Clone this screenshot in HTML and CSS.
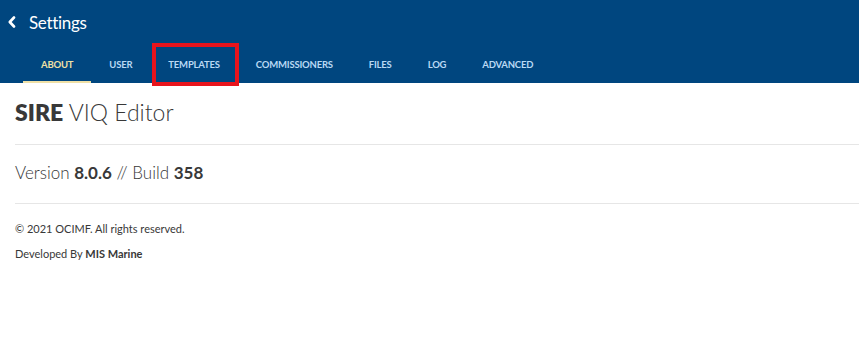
FILE: index.html
```html
<!DOCTYPE html>
<html lang="en">
<head>
    <meta charset="UTF-8">
    <meta name="viewport" content="width=device-width, initial-scale=1.0">
    <title>Settings</title>
    <link rel="stylesheet" href="styles.css">
</head>
<body>
    <header class="header">
        <div class="header-top">
            <svg class="back-icon" width="10" height="12" viewBox="0 0 10 12">
                <path d="M7 1.5 L2.8 6 L7 10.5" fill="none" stroke="#ffffff" stroke-width="2.6" stroke-linecap="round" stroke-linejoin="round"/>
            </svg>
            <span class="header-title">Settings</span>
        </div>
        <nav class="tabs">
            <a class="tab active">ABOUT</a>
            <a class="tab">USER</a>
            <a class="tab highlight">TEMPLATES</a>
            <a class="tab">COMMISSIONERS</a>
            <a class="tab">FILES</a>
            <a class="tab">LOG</a>
            <a class="tab">ADVANCED</a>
        </nav>
    </header>

    <main class="content">
        <h1 class="app-name"><b>SIRE</b> VIQ Editor</h1>
        <div class="version">Version <b>8.0.6</b> // Build <b>358</b></div>
        <div class="credits">
            <p>&copy; 2021 OCIMF. All rights reserved.</p>
            <p>Developed By <b>MIS Marine</b></p>
        </div>
    </main>
</body>
</html>
```

FILE: styles.css
```css
:root {
    --header-bg: #00467f;
    --tab-color: #b9d9f4;
    --tab-active: #efe0a6;
    --text-color: #383838;
    --line-color: #e6e6e6;
}

body {
    margin: 0;
    font-family: 'Lato', 'Open Sans', sans-serif;
    color: var(--text-color);
    background: #ffffff;
}

.header {
    background: var(--header-bg);
    height: 83px;
    display: flex;
    flex-direction: column;
}

.header-top {
    display: flex;
    align-items: center;
    height: 44px;
    padding-left: 7px;
}

.back-icon {
    margin-right: 12px;
    margin-top: -1px;
}

.header-title {
    color: #ffffff;
    font-size: 17px;
    letter-spacing: -0.3px;
}

.tabs {
    display: flex;
    padding-left: 23px;
    flex: 1;
}

.tab {
    position: relative;
    display: flex;
    align-items: center;
    padding: 3px 18px 0;
    color: var(--tab-color);
    font-size: 9.5px;
    letter-spacing: -0.2px;
    font-weight: bold;
    border-bottom: 2px solid transparent;
}

.tab.active {
    color: var(--tab-active);
    border-bottom-color: var(--tab-active);
}

.tab.highlight::after {
    content: '';
    position: absolute;
    left: 2px;
    right: -1px;
    top: -1px;
    bottom: -5px;
    border: 4px solid #e8141c;
}

.content {
    padding: 0 0 0 15px;
}

.app-name {
    margin: 0;
    padding: 15px 0 18px;
    font-size: 23px;
    font-weight: 300;
    line-height: 28px;
    border-bottom: 1px solid var(--line-color);
}

.app-name b {
    font-weight: 800;
}

.version {
    font-size: 17px;
    font-weight: 300;
    padding: 17px 0 19px;
    line-height: 22px;
    border-bottom: 1px solid var(--line-color);
}

.version b {
    font-weight: bold;
}

.credits {
    padding-top: 18px;
    font-size: 11px;
}

.credits p {
    margin: 0 0 11px;
    line-height: 14px;
}
```
